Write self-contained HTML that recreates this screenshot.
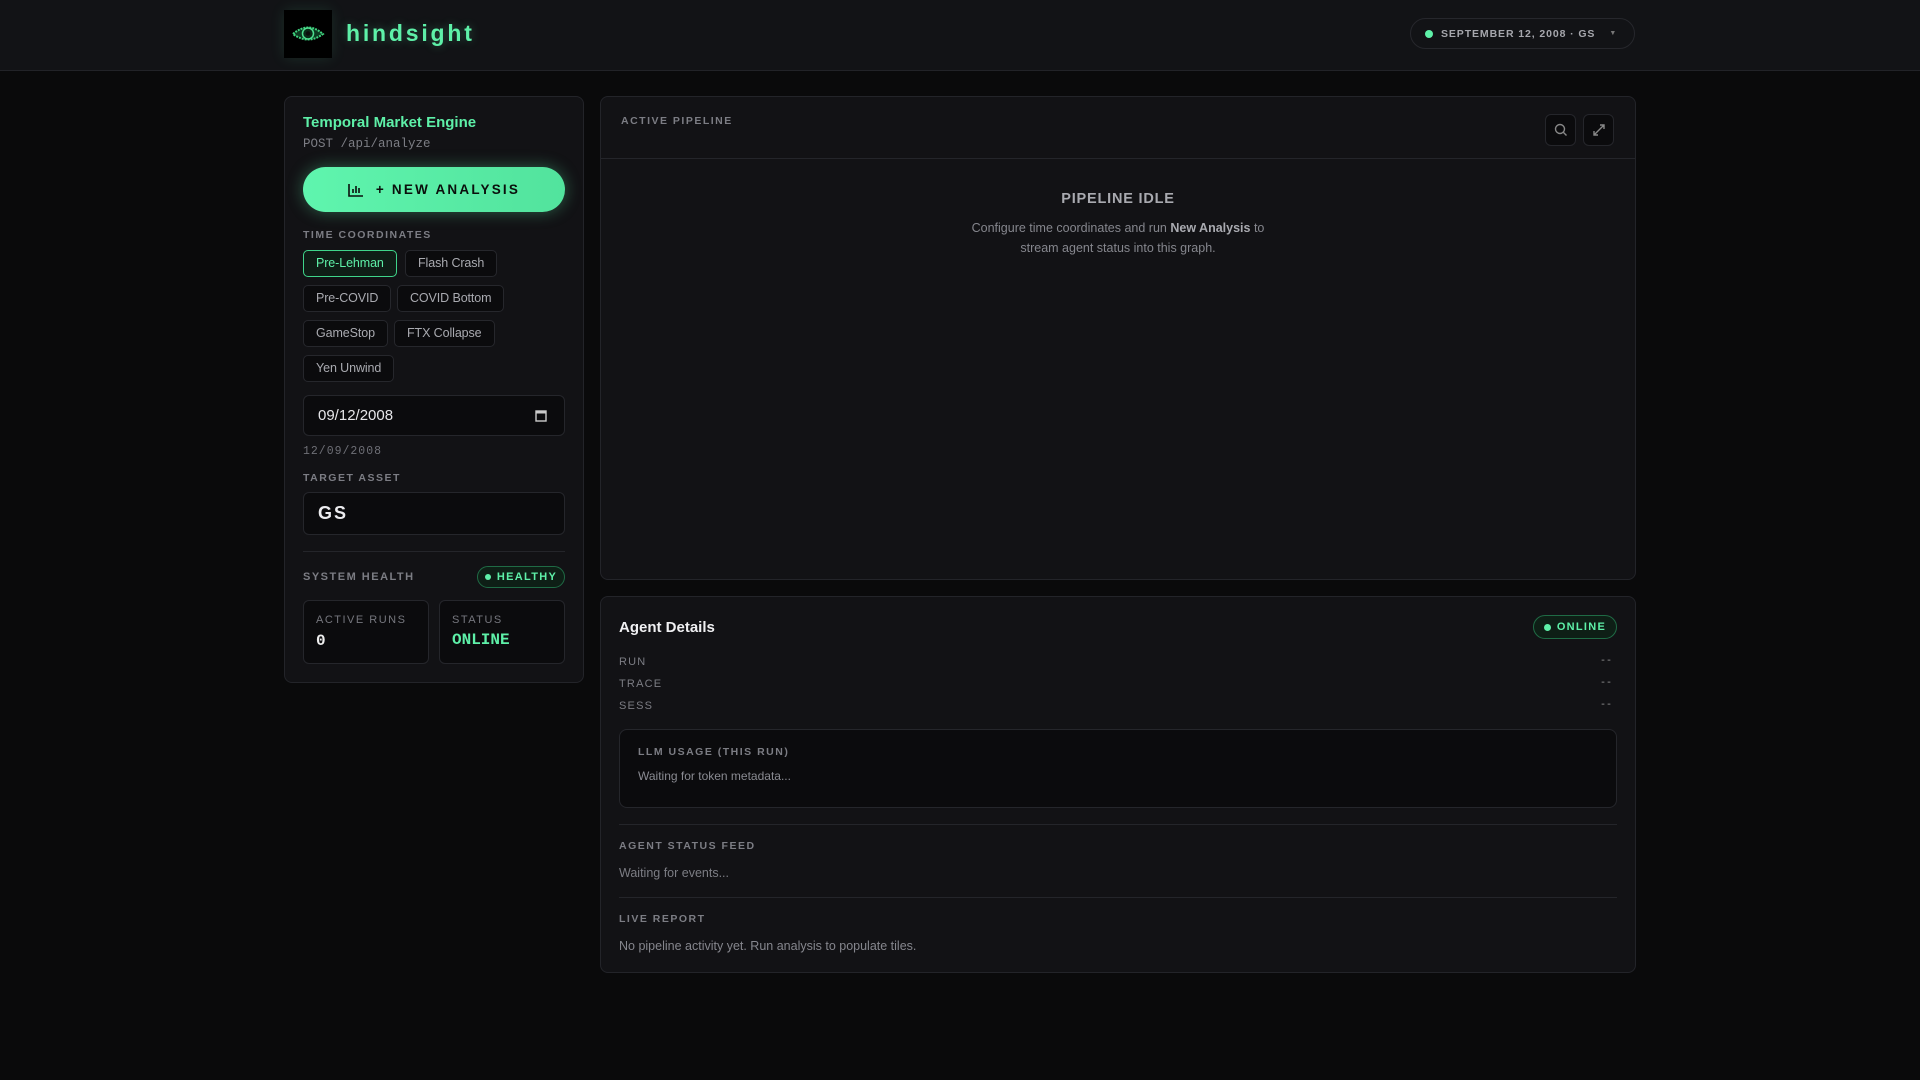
<!DOCTYPE html>
<html><head><meta charset="utf-8"><style>
*{box-sizing:border-box;margin:0;padding:0}
body{width:1920px;height:1080px;background:#0a0a0b;font-family:"Liberation Sans",sans-serif;color:#9a9ba1;position:relative;overflow:hidden}
.a{position:absolute;white-space:nowrap}
.mono{font-family:"Liberation Mono",monospace}
.lbl{font-size:11px;font-weight:bold;letter-spacing:1.5px;color:#7c7d84;text-transform:uppercase}
.panel{position:absolute;background:#121215;border:1px solid #232429;border-radius:8px}
.chip{position:absolute;height:27px;border:1px solid #26272c;border-radius:5px;background:#0b0b0d;color:#a9aab0;font-size:12.5px;line-height:25px;padding:0 12px;white-space:nowrap;letter-spacing:-0.1px}
.box{position:absolute;background:#0b0b0d;border:1px solid #25262b;border-radius:6px}
.pill{position:absolute;border:1px solid #1f6b45;background:#0e1f16;border-radius:999px;color:#5ef0a8;font-size:11px;font-weight:bold;letter-spacing:1.3px;display:flex;align-items:center;justify-content:center;gap:6px}
.dot{width:7px;height:7px;border-radius:50%;background:#5ef0a8;display:inline-block}
.hr{position:absolute;height:1px;background:#24252a}
</style></head><body>
<div class="a" style="left:0;top:0;width:1920px;height:71px;background:#121316;border-bottom:1px solid #222328"></div>
<div class="a" style="left:284px;top:10px;width:48px;height:48px;background:#000;box-shadow:0 0 14px rgba(94,240,168,.12)">
<svg width="48" height="48" viewBox="0 0 48 48"><path d="M9 24 Q24 11 39 24 Q24 35 9 24Z" fill="#0d3a22" stroke="#3fd47f" stroke-width="2" stroke-dasharray="2 1"/><circle cx="24" cy="23.5" r="5.5" fill="#0a2a18" stroke="#4ee090" stroke-width="1.5"/><circle cx="24" cy="23.5" r="2.2" fill="#0c0c0c"/></svg></div>
<div class="a" style="left:346px;top:20px;font-size:23px;font-weight:bold;letter-spacing:2.8px;color:#5ef0a8;text-shadow:0 0 10px rgba(94,240,168,.3)">hindsight</div>
<div class="a" style="left:1410px;top:18px;width:225px;height:31px;border:1px solid #26272c;border-radius:999px;background:#121316;display:flex;align-items:center;padding-left:14px;font-size:10.5px;font-weight:bold;letter-spacing:0.9px;color:#a6a7ad;white-space:nowrap"><span class="dot" style="width:8px;height:8px;margin-right:8px"></span>SEPTEMBER 12, 2008 · GS<span style="margin-left:14px;font-size:7px;color:#777">▼</span></div>

<div class="panel" style="left:284px;top:96px;width:300px;height:587px"></div>
<div class="a" style="left:303px;top:114px;font-size:15px;font-weight:bold;color:#5ef0a8">Temporal Market Engine</div>
<div class="a mono" style="left:303px;top:137px;font-size:12.5px;color:#7c7d84">POST /api/analyze</div>
<div class="a" style="left:303px;top:167px;width:262px;height:45px;border-radius:999px;background:linear-gradient(90deg,#5ff5ae,#52e39d);box-shadow:0 0 16px rgba(94,240,168,.35);display:flex;align-items:center;justify-content:center;font-size:13.5px;font-weight:bold;letter-spacing:2.2px;color:#0a0f0c">
<svg width="16" height="14" viewBox="0 0 16 14" style="margin-right:12px"><path d="M1 1V13H15" fill="none" stroke="#0a0f0c" stroke-width="1.6"/><path d="M5 10V6M8 10V3M11 10V5" stroke="#0a0f0c" stroke-width="1.6"/></svg>+ NEW ANALYSIS</div>
<div class="a lbl" style="left:303px;top:229px;font-size:10.5px">Time Coordinates</div>
<div class="chip" style="left:303px;top:250px;border-color:#3fd48a;color:#5ef0a8;background:#0f1d16">Pre-Lehman</div>
<div class="chip" style="left:405px;top:250px">Flash Crash</div>
<div class="chip" style="left:303px;top:285px">Pre-COVID</div>
<div class="chip" style="left:397px;top:285px">COVID Bottom</div>
<div class="chip" style="left:303px;top:320px">GameStop</div>
<div class="chip" style="left:394px;top:320px">FTX Collapse</div>
<div class="chip" style="left:303px;top:355px">Yen Unwind</div>
<div class="box" style="left:303px;top:395px;width:262px;height:41px"></div>
<div class="a" style="left:318px;top:407px;font-size:15px;color:#e6e6e9">09/12/2008</div>
<svg class="a" style="left:535px;top:409px" width="12" height="13" viewBox="0 0 12 13"><rect x="1" y="2" width="10" height="10" fill="none" stroke="#ccc" stroke-width="1.4"/><rect x="1" y="2" width="10" height="2.5" fill="#ccc"/></svg>
<div class="a mono" style="left:303px;top:445px;font-size:11.5px;letter-spacing:1px;color:#6e6f76">12/09/2008</div>
<div class="a lbl" style="left:303px;top:472px;font-size:10.5px">Target Asset</div>
<div class="box" style="left:303px;top:492px;width:262px;height:43px"></div>
<div class="a" style="left:318px;top:503px;font-size:18px;font-weight:bold;letter-spacing:2px;color:#ececef">GS</div>
<div class="hr" style="left:303px;top:551px;width:262px"></div>
<div class="a lbl" style="left:303px;top:571px">System Health</div>
<div class="pill" style="left:477px;top:566px;width:88px;height:22px"><span class="dot" style="width:6px;height:6px"></span>HEALTHY</div>
<div class="box" style="left:303px;top:600px;width:126px;height:64px"></div>
<div class="box" style="left:439px;top:600px;width:126px;height:64px"></div>
<div class="a lbl" style="left:316px;top:614px;font-weight:normal;font-size:11px;color:#76777e">Active Runs</div>
<div class="a mono" style="left:316px;top:632px;font-size:16px;font-weight:bold;color:#eee">0</div>
<div class="a lbl" style="left:452px;top:614px;font-weight:normal;font-size:11px;color:#76777e">Status</div>
<div class="a mono" style="left:452px;top:631px;font-size:16px;font-weight:bold;color:#5ef0a8">ONLINE</div>

<div class="panel" style="left:600px;top:96px;width:1036px;height:484px"></div>
<div class="a lbl" style="left:621px;top:115px;font-size:10.5px">Active Pipeline</div>
<div class="box" style="left:1545px;top:114px;width:31px;height:32px"></div>
<svg class="a" style="left:1553px;top:122px" width="16" height="16" viewBox="0 0 16 16"><circle cx="7" cy="7" r="4.5" fill="none" stroke="#888" stroke-width="1.4"/><path d="M10.3 10.3L13.5 13.5" stroke="#888" stroke-width="1.4"/></svg>
<div class="box" style="left:1583px;top:114px;width:31px;height:32px"></div>
<svg class="a" style="left:1591px;top:122px" width="16" height="16" viewBox="0 0 16 16"><path d="M3 13L13 3M9 3H13V7M3 9V13H7" fill="none" stroke="#888" stroke-width="1.4"/></svg>
<div class="hr" style="left:601px;top:158px;width:1034px"></div>
<div class="a" style="left:600px;width:1036px;top:191px;text-align:center;font-size:14.5px;font-weight:bold;letter-spacing:0.8px;color:#a9aab0">PIPELINE IDLE</div>
<div class="a" style="left:600px;width:1036px;top:218px;text-align:center;font-size:12.5px;line-height:20px;color:#85868d">Configure time coordinates and run <b style="color:#a9aab0">New Analysis</b> to<br>stream agent status into this graph.</div>

<div class="panel" style="left:600px;top:596px;width:1036px;height:377px"></div>
<div class="a" style="left:619px;top:619px;font-size:15px;font-weight:bold;color:#f0f0f2">Agent Details</div>
<div class="pill" style="left:1533px;top:615px;width:84px;height:24px"><span class="dot" style="width:7px;height:7px"></span>ONLINE</div>
<div class="a" style="left:619px;top:656px;font-size:11px;letter-spacing:1.2px;color:#7c7d84">RUN</div>
<div class="a" style="left:619px;top:678px;font-size:11px;letter-spacing:1.2px;color:#7c7d84">TRACE</div>
<div class="a" style="left:619px;top:700px;font-size:11px;letter-spacing:1.2px;color:#7c7d84">SESS</div>
<div class="a mono" style="left:1600px;top:656px;font-size:10px;color:#999">--</div>
<div class="a mono" style="left:1600px;top:678px;font-size:10px;color:#999">--</div>
<div class="a mono" style="left:1600px;top:700px;font-size:10px;color:#999">--</div>
<div class="box" style="left:619px;top:729px;width:998px;height:79px;border-radius:8px"></div>
<div class="a lbl" style="left:638px;top:746px;font-size:10.5px">LLM Usage (this run)</div>
<div class="a" style="left:638px;top:769px;font-size:12px;color:#8a8b92">Waiting for token metadata...</div>
<div class="hr" style="left:619px;top:824px;width:998px"></div>
<div class="a lbl" style="left:619px;top:840px;font-size:10.5px">Agent Status Feed</div>
<div class="a" style="left:619px;top:866px;font-size:12.5px;color:#7c7d84">Waiting for events...</div>
<div class="hr" style="left:619px;top:897px;width:998px"></div>
<div class="a lbl" style="left:619px;top:913px;font-size:10.5px">Live Report</div>
<div class="a" style="left:619px;top:939px;font-size:12.5px;color:#85868d">No pipeline activity yet. Run analysis to populate tiles.</div>
</body></html>
